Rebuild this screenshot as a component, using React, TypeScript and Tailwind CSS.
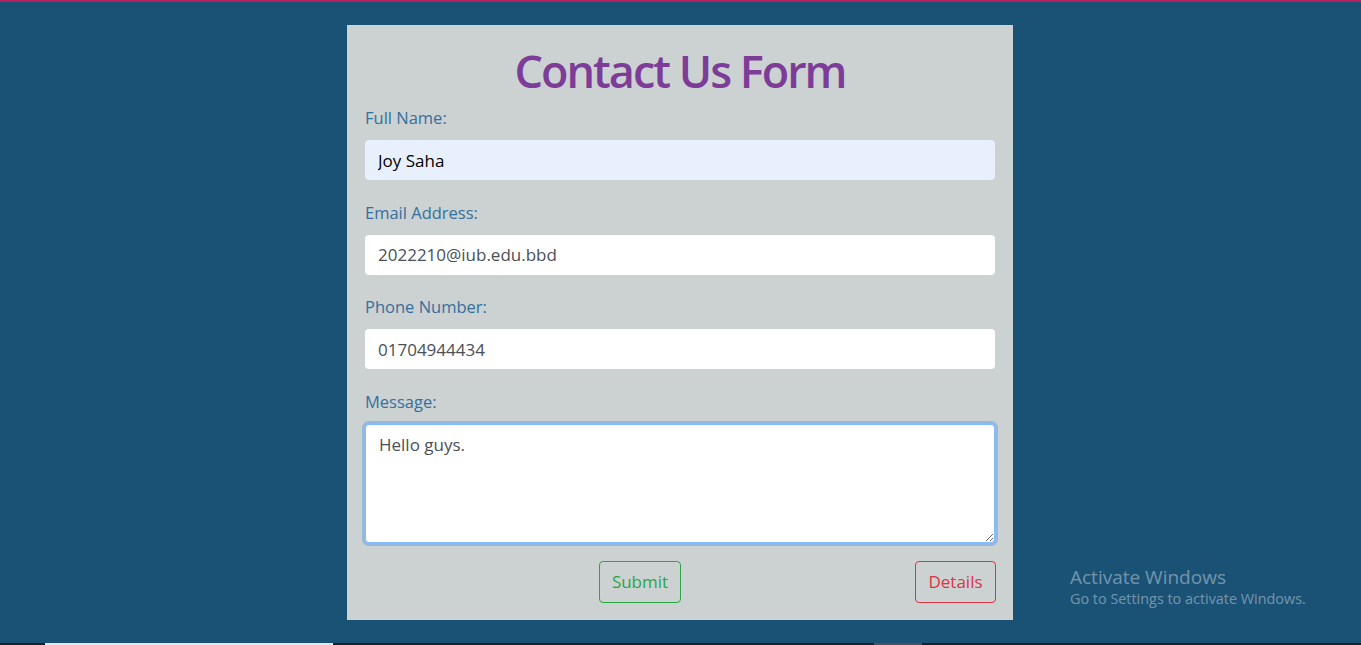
import { useState } from 'react'

const font = { fontFamily: '"Open Sans", "Noto Sans", sans-serif' }

function Field({ label, children }: { label: string; children: React.ReactNode }) {
  return (
    <div className="flex flex-col">
      <label className="text-[16.5px] leading-[24px] text-[#34709f] mb-[10px]">{label}</label>
      {children}
    </div>
  )
}

export default function App() {
  const [name, setName] = useState('Joy Saha')
  const [email, setEmail] = useState('2022210@iub.edu.bbd')
  const [phone, setPhone] = useState('01704944434')
  const [message, setMessage] = useState('Hello guys.')

  return (
    <div className="relative h-[645px] w-full bg-[#1a5276] flex flex-col overflow-hidden" style={font}>
      {/* top accent */}
      <div className="h-[2px] bg-[#b5205e]" />

      <div className="flex-1 flex justify-center pt-[23px] pr-[1px]">
        <form
          className="w-[666px] h-[595px] bg-[#ccd1d1] px-[18px] flex flex-col"
          onSubmit={(e) => e.preventDefault()}
        >
          <h1 className="text-center text-[45px] font-semibold text-[#7d3c98] leading-[54px] mt-[19px] mb-[8px] tracking-[-2px]">
            Contact Us Form
          </h1>

          <div className="flex flex-col gap-[20.5px]">
            <Field label="Full Name:">
              <input
                value={name}
                onChange={(e) => setName(e.target.value)}
                className="h-[40px] rounded-[4px] bg-[#e8f0fe] px-[13px] text-[17px] text-black outline-none"
              />
            </Field>
            <Field label="Email Address:">
              <input
                value={email}
                onChange={(e) => setEmail(e.target.value)}
                className="h-[40px] rounded-[4px] bg-white px-[13px] text-[17px] text-[#495057] outline-none"
              />
            </Field>
            <Field label="Phone Number:">
              <input
                value={phone}
                onChange={(e) => setPhone(e.target.value)}
                className="h-[40px] rounded-[4px] bg-white px-[13px] text-[17px] text-[#495057] outline-none"
              />
            </Field>
            <Field label="Message:">
              <textarea
                value={message}
                onChange={(e) => setMessage(e.target.value)}
                className="h-[119px] rounded-[4px] bg-white px-[13px] py-[7px] text-[17px] leading-[26px] text-[#495057] outline-none border border-[#80bdff] ring-[3px] ring-[#93b9e0]"
              />
            </Field>
          </div>

          <div className="flex items-center mt-[18px]">
            <div className="flex-1 flex justify-center">
              <button
                type="submit"
                className="h-[42px] px-[12px] rounded-[4px] border border-[#28a745] text-[#28a745] text-[17px]"
              >
                Submit
              </button>
            </div>
            <button
              type="button"
              className="h-[42px] w-[81px] rounded-[4px] border border-[#dc3545] text-[#dc3545] text-[17px] mr-[-1px]"
            >
              Details
            </button>
          </div>
        </form>
      </div>

      {/* windows watermark */}
      <div className="absolute left-[1070px] top-[565px] text-white/40 pointer-events-none">
        <div className="text-[19px] leading-[24px]">Activate Windows</div>
        <div className="text-[14.4px] leading-[20px]">Go to Settings to activate Windows.</div>
      </div>

      {/* taskbar sliver */}
      <div className="h-[2px] bg-[#202020] flex">
        <div className="ml-[45px] w-[288px] bg-[#e8e8e8]" />
        <div className="ml-[541px] w-[48px] bg-[#505050]" />
      </div>
    </div>
  )
}
